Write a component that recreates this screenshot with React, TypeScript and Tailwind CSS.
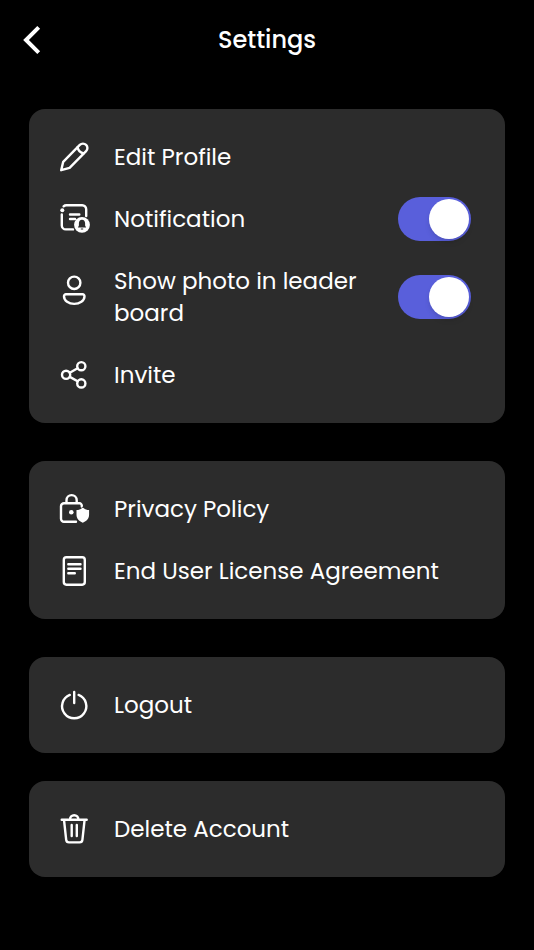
import { useState } from "react";
import type { ReactNode } from "react";
import clsx from "clsx";

function Icon({ children }: { children: ReactNode }) {
  return (
    <svg
      viewBox="0 0 30 30"
      className="h-[30px] w-[30px] shrink-0 overflow-visible"
      fill="none"
      stroke="currentColor"
      strokeWidth="2.4"
      strokeLinecap="round"
      strokeLinejoin="round"
      aria-hidden="true"
    >
      {children}
    </svg>
  );
}

const PencilIcon = () => (
  <Icon>
    <path d="M2.2 28.2 4.2 19.8 20.8 2.9a4.400 4.400 0 0 1 6.300 6.300L10.600 25.800Z" />
    <path d="M18.600 5.200c.6 3.400 2.800 5.600 6.200 6.200" />
  </Icon>
);

const NotificationIcon = () => (
  <Icon>
    <path d="M4.600 3.300C5.400 2.500 6.300 2.200 7.400 2.200H23.200a4 4 0 0 1 4 4V13M2.800 11.500V22.400a4 4 0 0 0 4 4H14" />
    <circle cx="3.300" cy="7.300" r="2" fill="currentColor" stroke="none" />
    <path d="M11 11.500H20.300M11 16H16" />
    <circle cx="23" cy="21.800" r="7.900" fill="currentColor" stroke="none" />
    <path
      d="M23 16.700c-2 0-3.100 1.600-3.100 3.500v2.300l-1 1.900h8.200l-1-1.900v-2.300c0-1.900-1.100-3.500-3.100-3.500ZM21.800 25.600h2.400v1h-2.400Z"
      fill="#2c2c2c"
      stroke="none"
    />
  </Icon>
);

const PersonIcon = () => (
  <Icon>
    <circle cx="15.200" cy="7.800" r="6.200" />
    <path d="M6.900 19.300H23.600a1.900 1.900 0 0 1 1.900 1.900c0 4.600-4.900 7.700-10.300 7.700S5 25.800 5 21.200a1.900 1.900 0 0 1 1.900-1.900Z" />
  </Icon>
);

const ShareIcon = () => (
  <Icon>
    <circle cx="22.300" cy="6.200" r="4.100" />
    <circle cx="7.100" cy="14.800" r="4.100" />
    <circle cx="22.300" cy="23.400" r="4.100" />
    <path d="m10.800 12.700 7.800-4.400M10.800 16.900l7.800 4.400" />
  </Icon>
);

const LockIcon = () => (
  <Icon>
    <path d="M17 27.800H5a3 3 0 0 1-3-3V12.300a3 3 0 0 1 3-3H20.500a2.300 2.300 0 0 1 2.300 2.300V12.600M7.500 9.300V6.200a5.100 5.100 0 0 1 10.200 0V9.300" />
    <circle cx="12.300" cy="18.300" r="2.300" fill="currentColor" stroke="none" />
    <path
      d="M23.800 13.600c2 1.700 3.900 2.300 6.300 2.500v4.400c0 3.900-2.300 6.600-6.300 8.300-4-1.700-6.300-4.400-6.300-8.300v-4.400c2.400-.2 4.300-.8 6.300-2.500Z"
      fill="currentColor"
      stroke="#2c2c2c"
      strokeWidth="1"
      paintOrder="stroke"
    />
  </Icon>
);

const DocumentIcon = () => (
  <Icon>
    <rect x="4.800" y="1.300" width="21" height="27.400" rx="2.600" />
    <path d="M9.300 8.300H21.500M9.300 12.800H21.500M9.300 17.300H15.800" />
  </Icon>
);

const PowerIcon = () => (
  <Icon>
    <path d="M10.800 4.900a12.100 12.100 0 1 0 8.800 0M15.200 2V13" />
  </Icon>
);

const TrashIcon = () => (
  <Icon>
    <path d="M2.700 5.800H27.700M11 5.400a4.200 4.200 0 0 1 8.400 0M5 5.800 7.200 25.900a2.800 2.800 0 0 0 2.800 2.500H20.600a2.800 2.800 0 0 0 2.800-2.500L25.600 5.800M12.700 11V22M17.800 11V22" />
  </Icon>
);

function Card({ children, className }: { children: ReactNode; className?: string }) {
  return (
    <section
      className={clsx("flex flex-col gap-[30px] rounded-2xl bg-[#2c2c2c] py-8 pr-[34px] pl-[30px]", className)}
    >
      {children}
    </section>
  );
}

function LinkRow({ icon, label, href }: { icon: ReactNode; label: string; href: string }) {
  return (
    <a href={href} className="flex items-center gap-[25px]">
      {icon}
      <span>{label}</span>
    </a>
  );
}

function ActionRow({ icon, label }: { icon: ReactNode; label: string }) {
  return (
    <button type="button" className="flex w-full items-center gap-[25px] text-left">
      {icon}
      <span>{label}</span>
    </button>
  );
}

function ToggleRow({ id, icon, label }: { id: string; icon: ReactNode; label: string }) {
  const [enabled, setEnabled] = useState(true);
  return (
    <div className="flex items-center">
      <label htmlFor={id} className="flex flex-1 items-start gap-[25px]">
        {icon}
        <span className="flex-1">{label}</span>
      </label>
      <input
        id={id}
        type="checkbox"
        role="switch"
        checked={enabled}
        onChange={(e) => setEnabled(e.target.checked)}
        className="-my-1.5 flex h-11 w-[73px] shrink-0 cursor-pointer appearance-none items-center rounded-full bg-[#555555] px-0.5 before:h-10 before:w-10 before:rounded-full before:bg-white before:shadow-md checked:justify-end checked:bg-[#595fdb]"
      />
    </div>
  );
}

export default function App() {
  return (
    <div className="min-h-screen bg-black font-['Poppins','Inter',sans-serif] text-[23px] leading-8 text-white">
      <header className="grid h-20 grid-cols-[1fr_auto_1fr] items-center px-5">
        <button type="button" aria-label="Back" className="justify-self-start">
          <svg viewBox="0 0 24 32" className="h-8 w-6" fill="none" stroke="currentColor" strokeWidth="4">
            <path d="M18.700 3.300 6 16 18.700 28.700" />
          </svg>
        </button>
        <h1 className="text-2xl font-medium">Settings</h1>
      </header>

      <main className="px-[29px] pt-[29px] pb-12">
        <Card>
          <LinkRow href="#profile" icon={<PencilIcon />} label="Edit Profile" />
          <ToggleRow id="notification" icon={<NotificationIcon />} label="Notification" />
          <ToggleRow
            id="leaderboard-photo"
            icon={
              <span className="pt-2.5">
                <PersonIcon />
              </span>
            }
            label="Show photo in leader board"
          />
          <ActionRow icon={<ShareIcon />} label="Invite" />
        </Card>

        <Card className="mt-[38px]">
          <LinkRow href="#privacy" icon={<LockIcon />} label="Privacy Policy" />
          <LinkRow href="#eula" icon={<DocumentIcon />} label="End User License Agreement" />
        </Card>

        <Card className="mt-[38px]">
          <ActionRow icon={<PowerIcon />} label="Logout" />
        </Card>

        <Card className="mt-7">
          <ActionRow icon={<TrashIcon />} label="Delete Account" />
        </Card>
      </main>
    </div>
  );
}
